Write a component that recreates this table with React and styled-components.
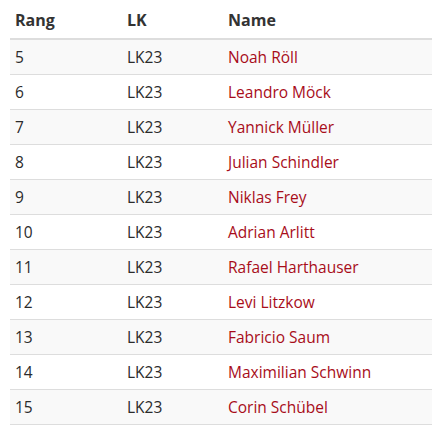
import React from 'react'
import styled, { createGlobalStyle } from 'styled-components'

const GlobalStyle = createGlobalStyle`
  body {
    margin: 0;
    background: #fff;
    font-family: "Open Sans", "Liberation Sans", sans-serif;
  }
`

const rows = [
  [5, 'LK23', 'Noah Röll'],
  [6, 'LK23', 'Leandro Möck'],
  [7, 'LK23', 'Yannick Müller'],
  [8, 'LK23', 'Julian Schindler'],
  [9, 'LK23', 'Niklas Frey'],
  [10, 'LK23', 'Adrian Arlitt'],
  [11, 'LK23', 'Rafael Harthauser'],
  [12, 'LK23', 'Levi Litzkow'],
  [13, 'LK23', 'Fabricio Saum'],
  [14, 'LK23', 'Maximilian Schwinn'],
  [15, 'LK23', 'Corin Schübel'],
]

function App() {
  return (
    <Wrapper>
      <GlobalStyle />
      <Table>
        <colgroup>
          <col style={{ width: 112 }} />
          <col style={{ width: 101 }} />
          <col />
        </colgroup>
        <thead>
          <tr>
            <Th>Rang</Th>
            <Th>LK</Th>
            <Th>Name</Th>
          </tr>
        </thead>
        <tbody>
          {rows.map(([rang, lk, name], i) => (
            <Row key={rang} $striped={i % 2 === 0}>
              <Td>{rang}</Td>
              <Td>{lk}</Td>
              <Td><PlayerLink href="#">{name}</PlayerLink></Td>
            </Row>
          ))}
        </tbody>
      </Table>
    </Wrapper>
  )
}

const Wrapper = styled.div`
  padding-left: 10px;
  width: 440px;
`

const Table = styled.table`
  width: 100%;
  border-collapse: collapse;
  border-spacing: 0;
  font-size: 15.5px;
  color: #333;
`

const Th = styled.th`
  text-align: left;
  font-weight: 700;
  font-size: 16px;
  padding: 11px 5px 9px;
  line-height: 18px;
  border-bottom: 2px solid #ddd;
  color: #333;
`

const Row = styled.tr`
  background: ${p => (p.$striped ? '#f9f9f9' : '#fff')};
  border-bottom: 1px solid #ddd;
`

const Td = styled.td`
  padding: 8px 5px;
  line-height: 18px;
  vertical-align: top;
  color: #2b2b2b;
`

const PlayerLink = styled.a`
  color: #a80d1a;
  text-decoration: none;
`

export default App
